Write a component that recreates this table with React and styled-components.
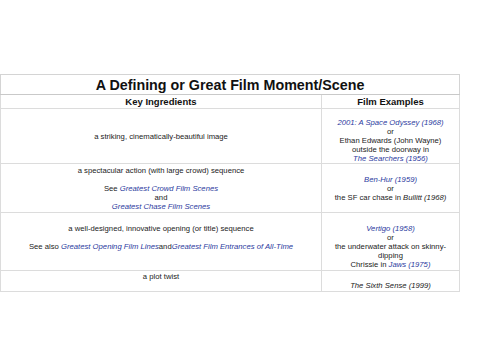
import styled, { createGlobalStyle } from "styled-components";

const Global = createGlobalStyle`
  html, body {
    margin: 0;
    padding: 0;
    background: #fff;
  }
  body {
    font-family: "Liberation Sans", Arial, sans-serif;
  }
`;

const Page = styled.div`
  width: 500px;
  height: 353px;
  padding-top: 74px;
  box-sizing: border-box;
`;

const Table = styled.table`
  width: 459px;
  table-layout: fixed;
  border-collapse: collapse;
  border: 1px solid #d4d4d4;
  color: #222;
`;

const Col = styled.col`
  width: ${(p) => p.$w}px;
`;

const Row = styled.tr`
  height: ${(p) => p.$h}px;
`;

const TitleCell = styled.th`
  font-size: 14.3px;
  font-weight: 700;
  color: #111;
  padding: 0;
  text-align: center;
  vertical-align: middle;
  border-bottom: 1px solid #c9c9c9;
`;

const HeadCell = styled.th`
  font-size: 9.5px;
  font-weight: 700;
  color: #111;
  padding: 0;
  text-align: center;
  vertical-align: middle;
  border: 1px solid #dcdcdc;
`;

const Cell = styled.td`
  font-size: 7.7px;
  line-height: 9px;
  padding: 0 2px;
  text-align: center;
  vertical-align: middle;
  border: 1px solid #dcdcdc;
`;

const Spacer = styled.div`
  height: 9px;
`;

const Line = styled.div``;

const Link = styled.a`
  color: #2b3a9e;
  font-style: italic;
  text-decoration: none;
`;

const Em = styled.i`
  color: #222;
`;

export default function App() {
  return (
    <Page>
      <Global />
      <Table>
        <colgroup>
          <Col $w={321} />
          <Col $w={138} />
        </colgroup>
        <tbody>
          <Row $h={20}>
            <TitleCell colSpan={2}>A Defining or Great Film Moment/Scene</TitleCell>
          </Row>
          <Row $h={14}>
            <HeadCell>Key Ingredients</HeadCell>
            <HeadCell>Film Examples</HeadCell>
          </Row>
          <Row $h={55}>
            <Cell>a striking, cinematically-beautiful image</Cell>
            <Cell>
              <Spacer />
              <Line><Link>2001: A Space Odyssey (1968)</Link></Line>
              <Line>or</Line>
              <Line>Ethan Edwards (John Wayne)</Line>
              <Line>outside the doorway in</Line>
              <Line><Link>The Searchers (1956)</Link></Line>
            </Cell>
          </Row>
          <Row $h={49}>
            <Cell>
              <Line>a spectacular action (with large crowd) sequence</Line>
              <Spacer />
              <Line>See <Link>Greatest Crowd Film Scenes</Link></Line>
              <Line>and</Line>
              <Line><Link>Greatest Chase Film Scenes</Link></Line>
            </Cell>
            <Cell>
              <Line><Link>Ben-Hur (1959)</Link></Line>
              <Line>or</Line>
              <Line>the SF car chase in <Em>Bullitt (1968)</Em></Line>
            </Cell>
          </Row>
          <Row $h={58}>
            <Cell>
              <Line>a well-designed, innovative opening (or title) sequence</Line>
              <Spacer />
              <Line>
                See also <Link>Greatest Opening Film Lines</Link>and
                <Link>Greatest Film Entrances of All-Time</Link>
              </Line>
              <Spacer />
            </Cell>
            <Cell>
              <Spacer />
              <Line><Link>Vertigo (1958)</Link></Line>
              <Line>or</Line>
              <Line>the underwater attack on skinny-dipping</Line>
              <Line>Chrissie in <Link>Jaws (1975)</Link></Line>
            </Cell>
          </Row>
          <Row $h={21}>
            <Cell>
              <Line>a plot twist</Line>
              <Spacer />
            </Cell>
            <Cell>
              <Spacer />
              <Line><Em>The Sixth Sense (1999)</Em></Line>
            </Cell>
          </Row>
        </tbody>
      </Table>
    </Page>
  );
}
